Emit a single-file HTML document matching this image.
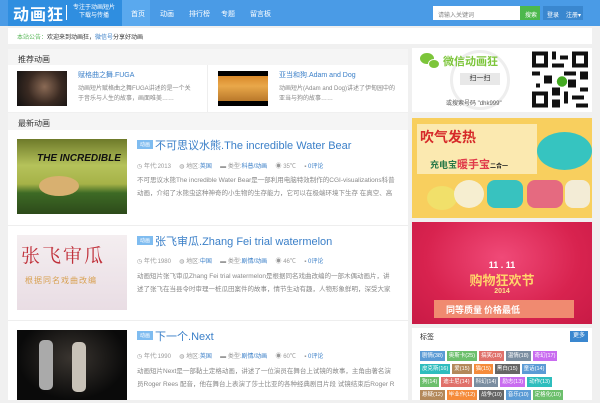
<!DOCTYPE html>
<html><head><meta charset="utf-8"><style>
*{margin:0;padding:0;box-sizing:border-box}
body{width:600px;height:400px;overflow:hidden;background:#f0f0f0;font-family:"Liberation Sans","Noto Sans CJK SC",sans-serif;position:relative}
.a{position:absolute}
.hd{left:0;top:0;width:600px;height:26px;background:#4a9be6}
.nav{color:#fff;font-size:7px;top:9px}
.w{background:#fff}
.sh{background:#f5f5f5;font-size:8px;color:#333;padding:5px 0 0 10px}
.t{color:#3a7fc8;font-size:11px;white-space:nowrap}
.m{font-size:6px;color:#999;white-space:nowrap}
.m b{color:#3a7fc8;font-weight:normal}
.d{font-size:6.5px;color:#888;line-height:13px;width:258px;height:26px;overflow:hidden;word-break:break-all}
.tag{display:inline-block;color:#fff;font-size:5.5px;height:10px;line-height:10px;padding:0 2px;margin:0 2px 3px 0;white-space:nowrap}
.bdg{display:inline-block;background:#7fbcf0;color:#fff;font-size:5px;padding:1px 3px;vertical-align:3px;margin-right:2px}
</style></head><body>
<div class="a hd"></div>
<div class="a" style="left:8px;top:0;width:114px;height:26px;background:#2f8ee0"></div>
<div class="a" style="left:13px;top:4px;color:#fff;font-size:16px;font-weight:bold;letter-spacing:1px;font-family:'Noto Sans CJK SC',sans-serif;line-height:18px">动画狂</div>
<div class="a" style="left:66px;top:5px;width:1px;height:15px;background:#fff"></div>
<div class="a" style="left:69px;top:4px;color:#fff;font-size:6px;line-height:8px;text-align:center;width:50px">专注于动画短片<br>下载与传播</div>
<div class="a" style="left:122px;top:0;width:28px;height:26px;background:#5aa9ee"></div>
<div class="a nav" style="left:131px">首页</div>
<div class="a nav" style="left:160px">动画</div>
<div class="a nav" style="left:189px">排行榜</div>
<div class="a nav" style="left:221px">专题</div>
<div class="a nav" style="left:250px">留言板</div>
<div class="a" style="left:433px;top:6px;width:87px;height:14px;background:#fff;font-size:6px;color:#888;padding:4px 0 0 5px">请输入关键词</div>
<div class="a" style="left:520px;top:6px;width:20px;height:14px;background:#4cb84c;color:#fff;font-size:6px;padding:4px 0 0 5px">搜索</div>
<div class="a" style="left:543px;top:6px;width:19px;height:14px;background:#3a87cf;color:#fff;font-size:6px;padding:4px 0 0 4px">登录</div>
<div class="a" style="left:562px;top:6px;width:21px;height:14px;background:#3a87cf;color:#fff;font-size:6px;padding:4px 0 0 4px">注册▾</div>

<div class="a w" style="left:8px;top:28px;width:584px;height:16px;font-size:6px;color:#333;padding:4px 0 0 9px"><span style="color:#5cb85c">本站公告：</span>欢迎来到动画狂，<span style="color:#3a7fc8">微信号</span>分享好动画</div>

<div class="a sh" style="left:8px;top:49px;width:400px;height:16px">推荐动画</div>
<div class="a w" style="left:8px;top:65px;width:400px;height:47px"></div>
<div class="a" style="left:207px;top:65px;width:1px;height:47px;background:#eee"></div>
<div class="a" style="left:17px;top:71px;width:50px;height:35px;background:radial-gradient(circle at 55% 45%,#8a6a55,#3a2a22 50%,#111)"></div>
<div class="a" style="left:78px;top:70px;color:#3a7fc8;font-size:7px">赋格曲之舞.FUGA</div>
<div class="a" style="left:78px;top:84px;width:118px;font-size:6px;color:#888;line-height:10px">动画短片赋格曲之舞FUGA讲述的是一个关于音乐与人生的故事，画面唯美……</div>
<div class="a" style="left:218px;top:71px;width:50px;height:35px;background:#000"><div style="margin-top:5px;height:25px;background:linear-gradient(#d98a2a,#e9a84a 40%,#b9782a)"></div></div>
<div class="a" style="left:279px;top:70px;color:#3a7fc8;font-size:7px">亚当和狗.Adam and Dog</div>
<div class="a" style="left:279px;top:84px;width:118px;font-size:6px;color:#888;line-height:10px">动画短片(Adam and Dog)讲述了伊甸园中的亚当与狗的故事……</div>

<div class="a sh" style="left:8px;top:113px;width:400px;height:17px">最新动画</div>
<div class="a w" style="left:8px;top:130px;width:400px;height:270px"></div>
<div class="a" style="left:8px;top:225px;width:400px;height:1px;background:#eee"></div>
<div class="a" style="left:8px;top:320px;width:400px;height:1px;background:#eee"></div>

<div class="a" style="left:17px;top:139px;width:110px;height:75px;background:linear-gradient(#6e7a2a,#b5c25a 35%,#a6b248 60%,#3d6a25 72%,#2d4a1a)"><div style="margin:14px 0 0 20px;font:bold italic 10px 'Liberation Sans';color:#111">THE INCREDIBLE</div><div style="position:absolute;left:22px;top:37px;width:40px;height:20px;border-radius:50%;background:#d8b070"></div></div>
<div class="a t" style="left:137px;top:137px"><span class="bdg">动画</span>不可思议水熊.The incredible Water Bear</div>
<div class="a m" style="left:137px;top:161px">◷ 年代:2013 &nbsp;&nbsp;&nbsp; ◍ 地区:<b>英国</b> &nbsp;&nbsp;&nbsp; ▬ 类型:<b>科普/动画</b> &nbsp;&nbsp;&nbsp; ◉ 35℃ &nbsp;&nbsp;&nbsp; ▪ <b>0评论</b></div>
<div class="a d" style="left:137px;top:174px">不可思议水熊The incredible Water Bear是一部利用电脑特效制作的CGI-visualizations科普动画，介绍了水熊虫这种神奇的小生物的生存能力，它可以在极端环境下生存 在真空、高温、低温下都不会死亡的可爱小家伙……</div>

<div class="a" style="left:17px;top:235px;width:110px;height:75px;background:linear-gradient(#f4eef0,#e9dde4)"><div style="margin:8px 0 0 4px;font-size:19px;color:#c0303a;letter-spacing:2px;font-family:'Noto Serif CJK SC',serif;line-height:24px">张飞审瓜</div><div style="margin:8px 0 0 8px;font-size:8px;color:#d8a050;letter-spacing:1px">根据同名戏曲改编</div></div>
<div class="a t" style="left:137px;top:233px"><span class="bdg">动画</span>张飞审瓜.Zhang Fei trial watermelon</div>
<div class="a m" style="left:137px;top:256px">◷ 年代:1980 &nbsp;&nbsp;&nbsp; ◍ 地区:<b>中国</b> &nbsp;&nbsp;&nbsp; ▬ 类型:<b>剧情/动画</b> &nbsp;&nbsp;&nbsp; ◉ 46℃ &nbsp;&nbsp;&nbsp; ▪ <b>0评论</b></div>
<div class="a d" style="left:137px;top:270px">动画短片张飞审瓜Zhang Fei trial watermelon是根据同名戏曲改编的一部木偶动画片，讲述了张飞在当县令时审理一桩瓜田案件的故事，情节生动有趣，人物形象鲜明，深受大家的喜爱和欢迎……</div>

<div class="a" style="left:17px;top:330px;width:110px;height:70px;background:radial-gradient(ellipse at 50% 40%,#3a3530,#0a0a0a 70%)"><div style="position:absolute;left:22px;top:10px;width:14px;height:50px;background:#aaa;border-radius:5px"></div><div style="position:absolute;left:55px;top:12px;width:14px;height:50px;background:#c8c2b8;border-radius:5px"></div></div>
<div class="a t" style="left:137px;top:328px"><span class="bdg">动画</span>下一个.Next</div>
<div class="a m" style="left:137px;top:351px">◷ 年代:1990 &nbsp;&nbsp;&nbsp; ◍ 地区:<b>英国</b> &nbsp;&nbsp;&nbsp; ▬ 类型:<b>剧情/动画</b> &nbsp;&nbsp;&nbsp; ◉ 60℃ &nbsp;&nbsp;&nbsp; ▪ <b>0评论</b></div>
<div class="a d" style="left:137px;top:365px">动画短片Next是一部黏土定格动画，讲述了一位演员在舞台上试镜的故事，主角由著名演员Roger Rees 配音，他在舞台上表演了莎士比亚的各种经典剧目片段 试镜结束后Roger Rees 离开了舞台，留下了……</div>

<div class="a w" style="left:412px;top:48px;width:180px;height:64px"></div>
<div class="a" style="left:450px;top:50px;width:60px;height:60px;border:3px solid #eee;border-radius:50%"></div>
<div class="a" style="left:420px;top:53px;width:14px;height:11px;background:#7cc53a;border-radius:50%"></div>
<div class="a" style="left:428px;top:59px;width:12px;height:10px;background:#7cc53a;border-radius:50%;border:1px solid #fff"></div>
<div class="a" style="left:443px;top:53px;color:#7cc53a;font-size:11px;font-weight:bold">微信动画狂</div>
<div class="a" style="left:460px;top:73px;width:40px;height:12px;background:#e8e8e8;font-size:7px;color:#333;text-align:center;line-height:12px">扫一扫</div>
<div class="a" style="left:446px;top:98px;font-size:6px;color:#555">或搜索号码 "dhk999"</div>
<svg class="a" style="left:532px;top:51px" width="56" height="57" viewBox="0 0 14 14"><rect width="14" height="14" fill="#fff"/><g fill="#111"><rect x="0" y="0" width="4" height="4"/><rect x="10" y="0" width="4" height="4"/><rect x="0" y="10" width="4" height="4"/><rect x="5" y="0" width="1" height="2"/><rect x="7" y="1" width="2" height="1"/><rect x="5" y="3" width="3" height="1"/><rect x="0" y="5" width="2" height="1"/><rect x="3" y="6" width="2" height="2"/><rect x="8" y="5" width="3" height="1"/><rect x="12" y="5" width="2" height="2"/><rect x="1" y="8" width="1" height="1"/><rect x="9" y="7" width="2" height="2"/><rect x="5" y="9" width="2" height="2"/><rect x="8" y="10" width="1" height="3"/><rect x="10" y="11" width="3" height="1"/><rect x="12" y="9" width="2" height="1"/><rect x="5" y="12" width="2" height="2"/><rect x="11" y="13" width="3" height="1"/></g><g fill="#fff"><rect x="1" y="1" width="2" height="2"/><rect x="11" y="1" width="2" height="2"/><rect x="1" y="11" width="2" height="2"/></g><circle cx="7.5" cy="7.5" r="1.3" fill="#4a2"/></svg>

<div class="a" style="left:412px;top:118px;width:180px;height:100px;background:#f8cf5e;overflow:hidden">
<div style="position:absolute;left:5px;top:6px;width:120px;height:50px;background:#fbe9b0"></div>
<div style="position:absolute;left:8px;top:9px;font-size:14px;font-weight:bold;color:#d62a2a;font-family:'Noto Sans CJK SC',sans-serif">吹气发热</div>
<div style="position:absolute;left:18px;top:38px;font-size:9px;color:#2a7a4a;font-weight:bold;font-family:'Noto Sans CJK SC',sans-serif">充电宝<span style="color:#e03a4a;font-size:11px">暖手宝</span><span style="color:#222;font-size:6px">二合一</span></div>
<div style="position:absolute;left:125px;top:14px;width:55px;height:38px;border-radius:50%;background:#36c4c0"></div>
<div style="position:absolute;left:15px;top:68px;width:30px;height:24px;border-radius:50%;background:#f1e06a"></div>
<div style="position:absolute;left:42px;top:62px;width:30px;height:28px;border-radius:50%;background:#f6eed0"></div>
<div style="position:absolute;left:75px;top:62px;width:36px;height:28px;border-radius:8px;background:#38c2bf"></div>
<div style="position:absolute;left:115px;top:62px;width:36px;height:28px;border-radius:8px;background:#e56a80"></div>
<div style="position:absolute;left:153px;top:62px;width:25px;height:28px;border-radius:8px;background:#f3ecd6"></div>
</div>

<div class="a" style="left:412px;top:222px;width:180px;height:102px;background:radial-gradient(ellipse at 50% 35%,#f04a78,#d8234f 60%,#c81a45);overflow:hidden">
<div style="position:absolute;left:0;right:0;top:38px;text-align:center;font-size:9px;color:#fff;font-weight:bold">11 . 11</div>
<div style="position:absolute;left:0;right:0;top:48px;text-align:center;font-size:13px;color:#ffd36a;font-weight:bold;font-family:'Noto Sans CJK SC',sans-serif">购物狂欢节</div>
<div style="position:absolute;left:0;right:0;top:66px;text-align:center;font-size:7px;color:#ffe08a;font-weight:bold">2014</div>
<div style="position:absolute;left:22px;top:78px;width:140px;height:18px;background:#f08a70;color:#fff;font-size:9px;font-weight:bold;padding:3px 0 0 12px;font-family:'Noto Sans CJK SC',sans-serif">同等质量 价格最低</div>
</div>

<div class="a w" style="left:412px;top:328px;width:180px;height:72px"></div>
<div class="a" style="left:420px;top:332px;font-size:7px;color:#333">标签</div>
<div class="a" style="left:570px;top:331px;width:18px;height:11px;background:#3a87cf;color:#fff;font-size:6px;text-align:center;line-height:11px">更多</div>
<div class="a" style="left:420px;top:351px;width:172px;line-height:0">
<span class="tag" style="background:#5b9bd5">剧情(38)</span><span class="tag" style="background:#6cbf6c">奥斯卡(25)</span><span class="tag" style="background:#e0706a">搞笑(18)</span><span class="tag" style="background:#7a8da0">温情(18)</span><span class="tag" style="background:#c96cf0">奇幻(17)</span><br><span class="tag" style="background:#2ebdbd">皮克斯(16)</span><span class="tag" style="background:#b3885a">爱(15)</span><span class="tag" style="background:#f58b3a">猫(15)</span><span class="tag" style="background:#666">黑白(15)</span><span class="tag" style="background:#5b9bd5">童话(14)</span><br><span class="tag" style="background:#6cbf6c">狗(14)</span><span class="tag" style="background:#e0706a">迪士尼(14)</span><span class="tag" style="background:#7a8da0">科幻(14)</span><span class="tag" style="background:#c96cf0">励志(13)</span><span class="tag" style="background:#2ebdbd">动作(13)</span><br><span class="tag" style="background:#b3885a">悬疑(12)</span><span class="tag" style="background:#f58b3a">毕业作(12)</span><span class="tag" style="background:#666">战争(10)</span><span class="tag" style="background:#5b9bd5">音乐(10)</span><span class="tag" style="background:#6cbf6c">定格化(10)</span>
</div>
</body></html>
